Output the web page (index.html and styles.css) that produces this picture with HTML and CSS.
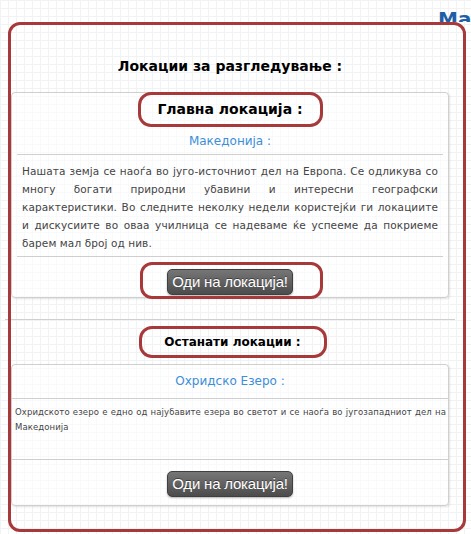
FILE: index.html
```html
<!DOCTYPE html>
<html lang="mk">
  <head>
    <meta charset="utf-8" />
    <title>Локации</title>
    <link rel="stylesheet" href="styles.css">
  </head>
  <body>
    <div class="site_head">
      <span class="site_name">Македонија</span>
    </div>
    <div class="locations">
      <h1 class="loc_title">Локации за разгледување :</h1>

      <div class="panel main_panel">
        <h2 class="panel_head marked">Главна локација :</h2>
        <h3 class="place">Македонија :</h3>
        <p class="place_text">Нашата земја се наоѓа во југо-источниот дел на Европа. Се одликува со многу богати природни убавини и интересни географски карактеристики. Во следните неколку недели користејќи ги локациите и дискусиите во оваа училница се надеваме ќе успееме да покриеме барем мал број од нив.</p>
        <div class="panel_foot">
          <a class="go marked" href="#">Оди на локација!</a>
        </div>
      </div>

      <hr class="split" />

      <div class="other_head">
        <h2 class="panel_head small marked">Останати локации :</h2>
      </div>

      <div class="panel other_panel">
        <h3 class="place">Охридско Езеро :</h3>
        <p class="place_text small">Охридското езеро е едно од најубавите езера во светот и се наоѓа во југозападниот дел на Македонија</p>
        <div class="panel_foot">
          <a class="go" href="#">Оди на локација!</a>
        </div>
      </div>

      <div class="frame"></div>
    </div>
  </body>
</html>
```

FILE: styles.css
```css
* {
  margin: 0;
  padding: 0;
  box-sizing: border-box;
}
body {
  width: 471px;
  height: 534px;
  overflow: hidden;
  background-color: #fff;
  background-image: linear-gradient(#f0f2f4 1px, transparent 1px),
                    linear-gradient(90deg, #f0f2f4 1px, transparent 1px);
  background-size: 8px 8px;
  font-family: "DejaVu Sans", Verdana, sans-serif;
}
.site_head {
  height: 22px;
  padding-left: 438px;
  white-space: nowrap;
  overflow: hidden;
}
.site_name {
  display: block;
  padding-top: 8px;
  font-size: 20px;
  line-height: 22px;
  font-weight: bold;
  color: #1f5fa6;
}
.locations {
  position: relative;
  width: 450px;
  margin-left: 5px;
  padding-top: 34px;
}
.loc_title {
  font-size: 14px;
  line-height: 20px;
  text-align: center;
  color: #000;
  margin-bottom: 16px;
}
.panel {
  margin: 0 6px;
  background: rgba(255,255,255,0.55);
  border: 1px solid #cfcfcf;
  border-radius: 4px;
  box-shadow: 1px 1px 2px rgba(0,0,0,0.12);
  text-align: center;
}
.main_panel {
  padding: 2px 5px 0;
  height: 206px;
}
.panel_head {
  display: inline-block;
  width: 179px;
  height: 29px;
  font-size: 14px;
  line-height: 29px;
  color: #000;
  border-radius: 10px;
}
.panel_head.small {
  font-size: 12px;
}
.marked {
  outline: 3px solid #a7393b;
  outline-offset: 0;
}
.place {
  font-size: 12px;
  font-weight: normal;
  line-height: 26px;
  color: #3b8ed8;
  border-bottom: 1px solid #cfcfcf;
  margin-top: 4px;
}
.place_text {
  padding: 7px 5px 4px;
  font-size: 10.5px;
  line-height: 18px;
  letter-spacing: 0.1px;
  text-align: justify;
  color: #444;
  border-bottom: 1px solid #cfcfcf;
}
.panel_foot {
  padding-top: 12px;
}
.go {
  display: inline-block;
  width: 126px;
  height: 26px;
  font-family: "Liberation Sans", Arial, sans-serif;
  font-size: 15px;
  letter-spacing: -0.2px;
  line-height: 24px;
  white-space: nowrap;
  color: #fff;
  text-decoration: none;
  text-shadow: 0 -1px 0 rgba(0,0,0,0.4);
  background: linear-gradient(#767676, #4c4c4c);
  border: 1px solid #3f3f3f;
  border-radius: 5px;
  box-shadow: 0 1px 2px rgba(0,0,0,0.3);
}
.go.marked {
  outline-width: 0;
  position: relative;
}
.go.marked::after {
  content: "";
  position: absolute;
  top: -8px;
  left: -28px;
  right: -31px;
  bottom: -5px;
  border: 3px solid #a7393b;
  border-radius: 12px;
}
.split {
  border: none;
  border-top: 1px solid #cfcfcf;
  margin-top: 21px;
}
.other_head {
  text-align: center;
  padding-top: 9px;
  margin-bottom: 9px;
}
.other_head .panel_head {
  width: 182px;
  height: 26px;
  line-height: 26px;
  margin-left: 5px;
}
.other_panel {
  height: 142px;
}
.other_panel .place {
  margin-top: 0;
  line-height: 33px;
}
.place_text.small {
  padding: 6px 2px 0 3px;
  height: 61px;
  font-size: 8.5px;
  line-height: 15px;
  letter-spacing: 0.1px;
}
.other_panel .panel_foot {
  padding-top: 11px;
}
.frame {
  position: absolute;
  top: 0;
  left: 3px;
  width: 458px;
  height: 510px;
  border: 3px solid #a7393b;
  border-radius: 12px;
  pointer-events: none;
}
```
